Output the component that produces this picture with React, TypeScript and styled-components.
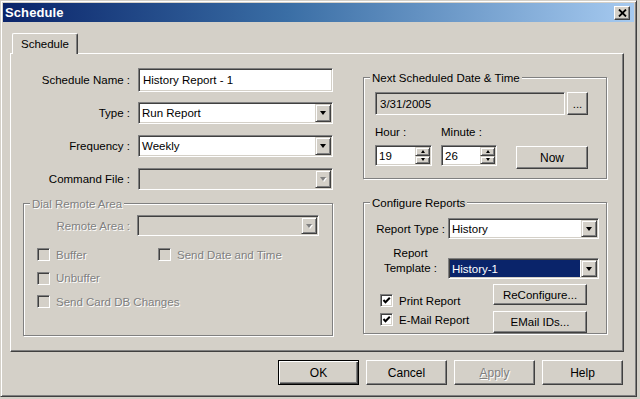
import React from "react";
import styled, { createGlobalStyle, css } from "styled-components";

const GlobalStyle = createGlobalStyle`
  html, body {
    margin: 0;
    background: #d4d0c8;
  }
  body {
    font-family: "Liberation Sans", Arial, sans-serif;
    font-size: 11.5px;
    color: #000;
  }
`;

const raised = css`
  border: 1px solid;
  border-color: #fff #404040 #404040 #fff;
  box-shadow: inset -1px -1px 0 #808080;
`;

const sunken = css`
  border: 1px solid;
  border-color: #808080 #fff #fff #808080;
  box-shadow: inset 1px 1px 0 #404040, inset -1px -1px 0 #d4d0c8;
`;

const disabledText = css`
  color: #808080;
  text-shadow: 1px 1px 0 #fff;
`;

type ComboProps = { value?: string; disabled?: boolean; selected?: boolean };

const Combo = ({ value = "", disabled, selected }: ComboProps) => (
  <ComboFrame $disabled={disabled}>
    <FieldText $selected={selected}>{value}</FieldText>
    <DropButton>
      <DownArrow $disabled={disabled} />
    </DropButton>
  </ComboFrame>
);

const Spin = ({ value }: { value: string }) => (
  <SpinFrame>
    <FieldText>{value}</FieldText>
    <SpinButtons>
      <SpinHalf>
        <SmallArrow $up />
      </SpinHalf>
      <SpinHalf>
        <SmallArrow />
      </SpinHalf>
    </SpinButtons>
  </SpinFrame>
);

type CheckProps = { label: string; checked?: boolean; disabled?: boolean };

const Check = ({ label, checked, disabled }: CheckProps) => (
  <CheckItem $disabled={disabled}>
    <CheckBox $disabled={disabled}>
      {checked && (
        <svg width="9" height="9" viewBox="0 0 9 9">
          <polyline points="1.5,4 3.5,6.3 7.8,1.8" fill="none" stroke="#000" strokeWidth="2" />
        </svg>
      )}
    </CheckBox>
    <span>{label}</span>
  </CheckItem>
);

const App = () => {
  return (
    <>
      <GlobalStyle />
      <Window>
        <TitleBar>
          <TitleText>Schedule</TitleText>
          <CloseButton>
            <svg width="9" height="8" viewBox="0 0 9 8">
              <path d="M1 0.5 L8 7.5 M8 0.5 L1 7.5" stroke="#000" strokeWidth="1.8" />
            </svg>
          </CloseButton>
        </TitleBar>
        <DialogBody>
          <TabStrip>
            <Tab>Schedule</Tab>
          </TabStrip>
          <TabPanel>
            <LeftColumn>
              <FormGrid>
                <FieldLabel>Schedule Name :</FieldLabel>
                <TextBox $h={24}>
                  <FieldText>History Report - 1</FieldText>
                </TextBox>
                <FieldLabel>Type :</FieldLabel>
                <Combo value="Run Report" />
                <FieldLabel>Frequency :</FieldLabel>
                <Combo value="Weekly" />
                <FieldLabel>Command File :</FieldLabel>
                <Combo disabled />
              </FormGrid>

              <GroupBox $mt={6.5} $h={139}>
                <Legend $disabled>Dial Remote Area</Legend>
                <RemoteRow>
                  <FieldLabel $disabled>Remote Area :</FieldLabel>
                  <Combo disabled />
                </RemoteRow>
                <CheckGrid>
                  <Check label="Buffer" disabled />
                  <Check label="Send Date and Time" disabled />
                  <Check label="Unbuffer" disabled />
                  <span />
                  <Check label="Send Card DB Changes" disabled />
                </CheckGrid>
              </GroupBox>
            </LeftColumn>

            <RightColumn>
              <GroupBox $h={108}>
                <Legend>Next Scheduled Date &amp; Time</Legend>
                <DateRow>
                  <TextBox $w={190} $h={23} $grey>
                    <FieldText>3/31/2005</FieldText>
                  </TextBox>
                  <PushButton $w={21} $h={23}>
                    ...
                  </PushButton>
                </DateRow>
                <TimeRow>
                  <TimeField $w={57}>
                    <span>Hour :</span>
                    <Spin value="19" />
                  </TimeField>
                  <TimeField $w={56}>
                    <span>Minute :</span>
                    <Spin value="26" />
                  </TimeField>
                  <NowButton $w={72} $h={23}>
                    Now
                  </NowButton>
                </TimeRow>
              </GroupBox>

              <GroupBox $mt={17} $h={138}>
                <Legend>Configure Reports</Legend>
                <ConfigGrid>
                  <FieldLabel>Report Type :</FieldLabel>
                  <Combo value="History" />
                  <TemplateLabel>
                    Report
                    <br />
                    Template :
                  </TemplateLabel>
                  <ComboCell>
                    <Combo value="History-1" selected />
                  </ComboCell>
                </ConfigGrid>
                <OutputRow>
                  <CheckStack>
                    <Check label="Print Report" checked />
                    <Check label="E-Mail Report" checked />
                  </CheckStack>
                  <ButtonStack>
                    <PushButton $w={94} $h={21}>
                      ReConfigure...
                    </PushButton>
                    <PushButton $w={94} $h={22}>
                      EMail IDs...
                    </PushButton>
                  </ButtonStack>
                </OutputRow>
              </GroupBox>
            </RightColumn>
          </TabPanel>

          <ButtonRow>
            <PushButton $w={81} $h={25} $default>
              OK
            </PushButton>
            <PushButton $w={81} $h={25}>
              Cancel
            </PushButton>
            <PushButton $w={81} $h={25} disabled>
              <u>A</u>pply
            </PushButton>
            <PushButton $w={81} $h={25}>
              Help
            </PushButton>
          </ButtonRow>
        </DialogBody>
      </Window>
    </>
  );
};

const Window = styled.div`
  box-sizing: border-box;
  width: 637px;
  height: 397px;
  padding: 2px;
  border: 1px solid;
  border-color: #d4d0c8 #404040 #404040 #d4d0c8;
  box-shadow: inset 1px 1px 0 #fff, inset -1px -1px 0 #808080;
  background: #d4d0c8;
  display: flex;
  flex-direction: column;
`;

const TitleBar = styled.div`
  height: 19px;
  flex-shrink: 0;
  display: flex;
  align-items: center;
  justify-content: space-between;
  padding: 0 4px 0 2px;
  background: linear-gradient(to right, #0a246a 0%, #3a6ea5 45%, #a6caf0 100%);
`;

const TitleText = styled.span`
  color: #fff;
  font-weight: bold;
  font-size: 13px;
  letter-spacing: 0.1px;
`;

const CloseButton = styled.div`
  box-sizing: border-box;
  width: 16px;
  height: 14px;
  ${raised};
  background: #d4d0c8;
  display: flex;
  align-items: center;
  justify-content: center;
`;

const DialogBody = styled.div`
  display: flex;
  flex-direction: column;
  padding: 11px 0 0 7px;
`;

const TabStrip = styled.div`
  display: flex;
  height: 20px;
  padding-left: 2px;
  position: relative;
  z-index: 1;
`;

const Tab = styled.div`
  box-sizing: border-box;
  width: 66px;
  height: 21px;
  border-top: 1px solid #fff;
  border-left: 1px solid #fff;
  border-right: 1px solid #404040;
  border-radius: 2px 2px 0 0;
  box-shadow: inset -1px 0 0 #808080;
  background: #d4d0c8;
  display: flex;
  align-items: center;
  justify-content: center;
  padding-bottom: 1px;
`;

const TabPanel = styled.div`
  box-sizing: border-box;
  width: 614px;
  height: 299px;
  ${raised};
  padding: 14px 16px 0 12px;
  display: grid;
  grid-template-columns: 310px 244px;
  column-gap: 30px;
  align-items: start;
`;

const LeftColumn = styled.div`
  display: flex;
  flex-direction: column;
`;

const RightColumn = styled.div`
  display: flex;
  flex-direction: column;
  margin-top: 2.5px;
`;

const FormGrid = styled.div`
  display: grid;
  grid-template-columns: 107px 195px;
  column-gap: 8px;
  row-gap: 10px;
  grid-auto-rows: 23px;
  align-items: center;
`;

const FieldLabel = styled.span<{ $disabled?: boolean }>`
  text-align: right;
  white-space: nowrap;
  ${(p) => p.$disabled && disabledText};
`;

const TextBox = styled.div<{ $w?: number; $h?: number; $grey?: boolean }>`
  box-sizing: border-box;
  width: ${(p) => (p.$w ? `${p.$w}px` : "100%")};
  height: ${(p) => (p.$h ? `${p.$h}px` : "100%")};
  ${sunken};
  background: ${(p) => (p.$grey ? "#d4d0c8" : "#fff")};
  padding: 2px;
  display: flex;
`;

const FieldText = styled.span<{ $selected?: boolean }>`
  flex: 1;
  display: flex;
  align-items: center;
  padding-left: 2px;
  white-space: nowrap;
  overflow: hidden;
  background: ${(p) => (p.$selected ? "#0a246a" : "transparent")};
  color: ${(p) => (p.$selected ? "#fff" : "#000")};
  margin-right: ${(p) => (p.$selected ? "1px" : "0")};
`;

const ComboFrame = styled.div<{ $disabled?: boolean }>`
  box-sizing: border-box;
  height: 22px;
  ${sunken};
  background: ${(p) => (p.$disabled ? "#d4d0c8" : "#fff")};
  padding: 1px;
  display: flex;
`;

const DropButton = styled.div`
  box-sizing: border-box;
  width: 16px;
  flex-shrink: 0;
  border: 1px solid;
  border-color: #d4d0c8 #404040 #404040 #d4d0c8;
  box-shadow: inset 1px 1px 0 #fff, inset -1px -1px 0 #808080;
  background: #d4d0c8;
  display: flex;
  align-items: center;
  justify-content: center;
`;

const DownArrow = styled.span<{ $disabled?: boolean }>`
  width: 0;
  height: 0;
  margin-top: 1px;
  border-left: 3.5px solid transparent;
  border-right: 3.5px solid transparent;
  border-top: 4px solid ${(p) => (p.$disabled ? "#808080" : "#000")};
  filter: ${(p) => (p.$disabled ? "drop-shadow(1px 1px 0 #fff)" : "none")};
`;

const GroupBox = styled.fieldset<{ $mt?: number; $h: number }>`
  box-sizing: border-box;
  margin: ${(p) => p.$mt ?? 0}px 0 0;
  padding: 0;
  min-width: 0;
  height: ${(p) => p.$h}px;
  border: 1px solid #808080;
  box-shadow: inset 1px 1px 0 #fff, 1px 1px 0 #fff;
`;

const Legend = styled.legend<{ $disabled?: boolean }>`
  margin-left: 6px;
  padding: 0 2px;
  line-height: 14px;
  background: #d4d0c8;
  ${(p) => p.$disabled && disabledText};
`;

const RemoteRow = styled.div`
  display: grid;
  grid-template-columns: 106px 182px;
  column-gap: 7px;
  align-items: center;
  height: 21px;
  margin-top: 4.5px;
  & > div {
    height: 21px;
  }
`;

const CheckGrid = styled.div`
  display: grid;
  grid-template-columns: 121px auto;
  grid-auto-rows: 16px;
  row-gap: 7.5px;
  margin-top: 10.5px;
  padding-left: 13px;
`;

const CheckItem = styled.label<{ $disabled?: boolean }>`
  display: flex;
  align-items: center;
  gap: 6px;
  height: 16px;
  white-space: nowrap;
  ${(p) => p.$disabled && disabledText};
`;

const CheckBox = styled.span<{ $disabled?: boolean }>`
  box-sizing: border-box;
  width: 13px;
  height: 13px;
  flex-shrink: 0;
  ${sunken};
  background: ${(p) => (p.$disabled ? "#d4d0c8" : "#fff")};
  display: flex;
  align-items: center;
  justify-content: center;
`;

const DateRow = styled.div`
  display: flex;
  gap: 2px;
  padding: 7.5px 0 0 11px;
`;

const TimeRow = styled.div`
  display: flex;
  align-items: flex-end;
  gap: 9px;
  padding-left: 11px;
  margin-top: 10px;
`;

const TimeField = styled.div<{ $w: number }>`
  width: ${(p) => p.$w}px;
  display: flex;
  flex-direction: column;
  gap: 6px;
  line-height: 14px;
`;

const SpinFrame = styled.div`
  box-sizing: border-box;
  height: 21px;
  ${sunken};
  background: #fff;
  padding: 1px;
  display: flex;
`;

const SpinButtons = styled.div`
  width: 15px;
  display: flex;
  flex-direction: column;
`;

const SpinHalf = styled.div`
  box-sizing: border-box;
  flex: 1;
  border: 1px solid;
  border-color: #d4d0c8 #404040 #404040 #d4d0c8;
  box-shadow: inset 1px 1px 0 #fff, inset -1px -1px 0 #808080;
  background: #d4d0c8;
  display: flex;
  align-items: center;
  justify-content: center;
`;

const SmallArrow = styled.span<{ $up?: boolean }>`
  width: 0;
  height: 0;
  border-left: 2.5px solid transparent;
  border-right: 2.5px solid transparent;
  ${(p) => (p.$up ? "border-bottom: 3px solid #000;" : "border-top: 3px solid #000;")}
`;

const PushButton = styled.button<{ $w: number; $h: number; $default?: boolean }>`
  box-sizing: border-box;
  width: ${(p) => p.$w}px;
  height: ${(p) => p.$h}px;
  padding: 0;
  margin: 0;
  font: inherit;
  color: #000;
  background: #d4d0c8;
  display: flex;
  align-items: center;
  justify-content: center;
  white-space: nowrap;
  ${(p) =>
    p.$default
      ? css`
          border: 1px solid #000;
          box-shadow: inset 1px 1px 0 #fff, inset -1px -1px 0 #404040, inset -2px -2px 0 #808080;
        `
      : raised};
  &:disabled {
    ${disabledText};
  }
`;

const NowButton = styled(PushButton)`
  margin-left: 10px;
  margin-bottom: -3px;
  font-size: 12px;
`;

const ConfigGrid = styled.div`
  display: grid;
  grid-template-columns: 81px 151px;
  column-gap: 3px;
  row-gap: 7px;
  align-items: center;
  padding-top: 8.5px;
  & > div {
    height: 21px;
  }
`;

const TemplateLabel = styled.span`
  text-align: center;
  line-height: 15px;
  padding-left: 12px;
  margin-bottom: 3px;
`;

const ComboCell = styled.div`
  align-self: end;
  & > div {
    height: 21px;
  }
`;

const OutputRow = styled.div`
  display: flex;
  margin-top: 5px;
  padding-left: 16px;
`;

const CheckStack = styled.div`
  width: 113px;
  display: flex;
  flex-direction: column;
  gap: 3px;
  padding-top: 8.5px;
`;

const ButtonStack = styled.div`
  display: flex;
  flex-direction: column;
  gap: 6px;
`;

const ButtonRow = styled.div`
  display: flex;
  justify-content: flex-end;
  gap: 7px;
  margin-top: 8px;
  padding-right: 11px;
  font-size: 12px;
`;

export default App;
